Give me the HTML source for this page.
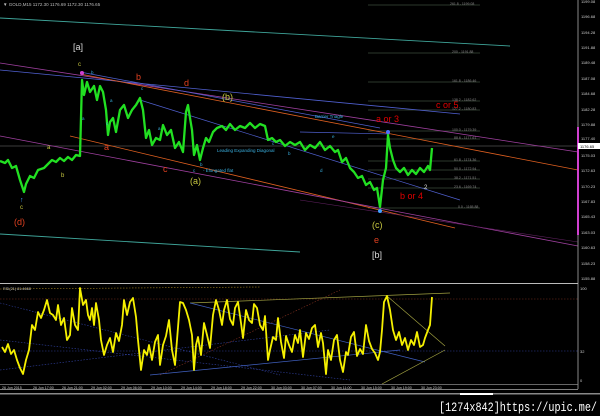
<!DOCTYPE html>
<html><head><meta charset="utf-8"><style>
html,body{margin:0;padding:0;background:#000;width:600px;height:416px;overflow:hidden}
svg{display:block;font-family:"Liberation Sans",sans-serif}
</style></head><body>
<svg width="600" height="416" viewBox="0 0 600 416" xmlns="http://www.w3.org/2000/svg">
<rect width="600" height="416" fill="#000"/>
<text x="3" y="6" font-size="4.5" fill="#bbb">▼ GOLD,M15  1172.30 1176.69 1172.30 1176.65</text>
<g stroke="#3a4a3a" stroke-width="0.7">
<line x1="368" y1="5" x2="480" y2="5"/><line x1="368" y1="53" x2="480" y2="53"/>
<line x1="368" y1="82" x2="480" y2="82"/><line x1="368" y1="101" x2="480" y2="101"/>
<line x1="368" y1="110" x2="480" y2="110"/><line x1="368" y1="131" x2="480" y2="131"/>
<line x1="368" y1="139" x2="480" y2="139"/><line x1="368" y1="161" x2="480" y2="161"/>
<line x1="368" y1="170" x2="480" y2="170"/><line x1="368" y1="179" x2="480" y2="179"/>
<line x1="368" y1="188" x2="480" y2="188"/><line x1="368" y1="208" x2="480" y2="208"/>
</g>
<g font-size="3.5" fill="#8a8a8a">
<text x="450" y="5">261.8 - 1199.08</text><text x="452" y="53">200 - 1191.88</text>
<text x="452" y="82">161.8 - 1186.46</text><text x="452" y="101">138.2 - 1182.62</text>
<text x="452" y="110">127.2 - 1180.83</text><text x="452" y="131">100.0 - 1179.39</text>
<text x="454" y="139">88.6 - 1177.61</text><text x="454" y="161">61.8 - 1174.36</text>
<text x="454" y="170">50.0 - 1172.94</text><text x="454" y="179">38.2 - 1171.51</text>
<text x="454" y="188">23.6 - 1169.74</text><text x="458" y="208">0.0 - 1165.88</text>
</g>
<line x1="0" y1="146" x2="578" y2="146" stroke="#777" stroke-width="0.6"/>
<line x1="0" y1="18" x2="510" y2="46" stroke="#3fa59a" stroke-width="0.9"/>
<line x1="0" y1="234" x2="300" y2="252" stroke="#3fa59a" stroke-width="0.9"/>
<line x1="0" y1="63" x2="578" y2="152" stroke="#a040a0" stroke-width="0.8"/>
<line x1="0" y1="70" x2="460" y2="114" stroke="#5060d0" stroke-width="0.8"/>
<line x1="80" y1="72" x2="380" y2="128" stroke="#5060d0" stroke-width="0.7"/>
<line x1="300" y1="132" x2="390" y2="134" stroke="#5060d0" stroke-width="0.7"/>
<line x1="80" y1="74" x2="578" y2="170" stroke="#e06020" stroke-width="0.8"/>
<line x1="70" y1="136" x2="455" y2="228" stroke="#e06020" stroke-width="0.8"/>
<line x1="0" y1="136" x2="578" y2="246" stroke="#a040a0" stroke-width="0.8"/>
<line x1="140" y1="100" x2="460" y2="200" stroke="#5060d0" stroke-width="0.7"/>
<line x1="300" y1="200" x2="578" y2="242" stroke="#602060" stroke-width="0.6"/>
<polyline fill="none" stroke="#22e022" stroke-width="2.3" stroke-linejoin="round" points="0,161 5,163 8,160 12,168 16,166 20,180 24,192 26,184 30,176 34,178 38,170 44,168 48,164 52,160 56,162 60,158 64,161 68,157 72,160 76,155 80,156 82,80 84,95 87,82 90,92 94,86 97,100 100,86 103,92 106,110 108,135 110,122 113,118 116,132 120,110 124,105 128,118 132,110 136,105 140,98 143,110 146,138 149,130 152,145 156,138 160,140 163,125 167,135 171,130 175,148 179,142 183,152 186,112 188,105 190,118 192,130 194,155 197,145 200,160 203,148 206,138 209,142 213,132 217,128 222,126 226,130 230,124 235,130 240,126 245,128 250,123 255,128 260,124 265,126 268,140 272,138 276,142 280,140 285,146 290,142 295,145 300,142 305,150 310,145 315,148 320,142 325,150 330,146 335,152 338,150 342,162 346,158 350,168 354,172 358,178 362,176 366,185 370,182 374,190 377,188 380,207 383,180 386,168 388,135 390,148 393,160 396,168 400,172 404,168 408,175 412,170 416,174 420,168 424,172 428,166 430,170 432,148"/>
<circle cx="82" cy="73" r="2" fill="#d040d0"/>
<circle cx="388" cy="132" r="2" fill="#5070ff"/>
<circle cx="380" cy="211" r="2" fill="#40a0ff"/>
<text x="20" y="202" font-size="7" fill="#40a0ff">↑</text>
<g font-size="9">
<text x="73" y="50" fill="#ddd">[a]</text>
<text x="372" y="258" fill="#ddd">[b]</text>
<text x="14" y="225" fill="#e04020">(d)</text>
<text x="374" y="243" fill="#e04020">e</text>
<text x="184" y="86" fill="#e04020">d</text>
<text x="136" y="80" fill="#e04020">b</text>
<text x="163" y="172" fill="#e04020">c</text>
<text x="104" y="150" fill="#e04020">a</text>
<text x="376" y="122" fill="#e00000">a or 3</text>
<text x="400" y="199" fill="#e00000">b or 4</text>
<text x="436" y="108" fill="#e00000">c or 5</text>
<text x="222" y="100" fill="#c8c840">(b)</text>
<text x="190" y="184" fill="#c8c840">(a)</text>
<text x="372" y="228" fill="#c8c840">(c)</text>
</g>
<g font-size="6">
<text x="78" y="66" fill="#c8c840">c</text>
<text x="47" y="149" fill="#c8c840">a</text>
<text x="61" y="177" fill="#c8c840">b</text>
<text x="20" y="209" fill="#c8c840">c</text>
<text x="424" y="189" fill="#ddd">2</text>
</g>
<g font-size="4.5" fill="#3ab0e0">
<text x="217" y="152">Leading Expanding Diagonal</text>
<text x="315" y="118">Barrier Triagle</text>
<text x="203" y="172">- Elongated flat</text>
<text x="91" y="74">b</text><text x="82" y="120">a</text><text x="106" y="125">c</text>
<text x="110" y="102">a</text><text x="141" y="90">c</text><text x="158" y="130">a</text>
<text x="200" y="166">b</text><text x="193" y="172">c</text><text x="320" y="172">d</text>
<text x="332" y="138">e</text><text x="288" y="155">b</text><text x="272" y="145">c</text>
</g>
<line x1="578" y1="0" x2="578" y2="389" stroke="#aaa" stroke-width="0.8"/>
<rect x="577" y="127" width="2" height="108" fill="#d040d0"/>
<g font-size="4" fill="#ccc">
<text x="581" y="3">1199.08</text><text x="581" y="18">1196.68</text><text x="581" y="34">1194.28</text>
<text x="581" y="49">1191.88</text><text x="581" y="64">1189.48</text><text x="581" y="80">1187.08</text>
<text x="581" y="95">1184.68</text><text x="581" y="111">1182.28</text><text x="581" y="126">1179.88</text>
<text x="581" y="140">1177.40</text><text x="581" y="157">1175.03</text><text x="581" y="172">1172.63</text>
<text x="581" y="188">1170.23</text><text x="581" y="203">1167.83</text><text x="581" y="218">1165.43</text>
<text x="581" y="234">1163.03</text><text x="581" y="249">1160.63</text><text x="581" y="265">1158.23</text>
<text x="581" y="280">1155.88</text>
</g>
<rect x="578" y="143" width="22" height="6" fill="#fff"/>
<text x="580" y="148" font-size="4" fill="#000">1176.65</text>
<line x1="0" y1="283.5" x2="578" y2="283.5" stroke="#bbb" stroke-width="1"/>
<text x="3" y="290" font-size="3.8" fill="#ccc">RSI(21) 81.4668</text>
<g stroke-dasharray="1.5,1.5" stroke-width="0.6" fill="none">
<line x1="0" y1="299" x2="578" y2="299" stroke="#803020"/>
<line x1="0" y1="351" x2="578" y2="351" stroke="#3040a0"/>
<line x1="0" y1="289" x2="260" y2="287" stroke="#a08020"/>
<line x1="0" y1="303" x2="280" y2="375" stroke="#3040a0"/>
<line x1="0" y1="340" x2="350" y2="380" stroke="#3040a0"/>
<line x1="0" y1="370" x2="330" y2="330" stroke="#3040a0"/>
<line x1="160" y1="375" x2="340" y2="290" stroke="#803020"/>
</g>
<g stroke-width="0.7" fill="none">
<line x1="190" y1="303" x2="450" y2="293" stroke="#a0a040"/>
<line x1="190" y1="303" x2="425" y2="362" stroke="#4060c0"/>
<line x1="150" y1="375" x2="400" y2="350" stroke="#4060c0"/>
<line x1="387" y1="296" x2="445" y2="346" stroke="#a0a040"/>
<line x1="382" y1="384" x2="445" y2="350" stroke="#a0a040"/>
</g>
<polyline fill="none" stroke="#f5f000" stroke-width="1.8" stroke-linejoin="round" points="2,347 5,352 8,344 11,354 14,350 17,360 20,368 23,374 26,360 29,350 32,325 35,330 38,312 41,318 44,310 47,300 50,313 53,315 56,320 58,305 61,325 64,318 67,340 70,335 72,308 75,325 78,330 80,288 83,305 86,300 88,315 90,320 92,308 94,325 96,303 99,320 101,340 104,355 107,345 110,338 113,352 116,333 119,341 122,325 124,300 127,315 130,302 133,298 136,317 138,340 141,370 144,350 147,355 149,345 152,360 155,342 158,335 160,365 163,345 166,336 169,320 172,350 175,365 177,340 180,302 183,303 186,310 189,320 192,335 194,370 196,345 198,337 201,355 204,323 207,335 210,348 213,315 216,300 219,310 222,325 224,310 227,300 230,319 233,325 235,308 238,302 241,323 243,338 246,310 249,320 252,323 254,304 257,308 260,325 263,330 265,316 268,360 270,350 273,337 276,340 278,318 281,342 284,358 286,336 289,345 292,352 295,335 298,343 300,330 303,357 306,333 309,339 312,328 315,325 318,347 321,333 323,343 326,374 328,350 331,360 334,340 337,335 340,360 343,372 346,352 348,355 351,337 354,332 357,356 360,349 363,354 366,325 369,341 372,349 375,353 378,360 380,352 382,330 384,302 387,296 390,310 393,330 396,340 399,332 402,345 405,338 408,350 411,340 414,345 417,332 420,347 423,345 425,338 428,330 430,325 432,297"/>
<g font-size="4" fill="#ccc"><text x="580" y="290">100</text><text x="580" y="353">32</text><text x="580" y="382">0</text></g>
<line x1="0" y1="384.5" x2="578" y2="384.5" stroke="#888" stroke-width="0.8"/>
<line x1="0" y1="389.5" x2="578" y2="389.5" stroke="#aaa" stroke-width="0.8"/>
<g font-size="3.6" fill="#ccc">
<text x="2" y="389">26 Jun 2015</text><text x="33" y="389">26 Jun 17:00</text><text x="62" y="389">26 Jun 21:00</text>
<text x="91" y="389">29 Jun 02:00</text><text x="121" y="389">29 Jun 06:00</text><text x="151" y="389">29 Jun 10:00</text>
<text x="181" y="389">29 Jun 14:00</text><text x="211" y="389">29 Jun 18:00</text><text x="241" y="389">29 Jun 22:00</text>
<text x="271" y="389">30 Jun 03:00</text><text x="301" y="389">30 Jun 07:00</text><text x="331" y="389">30 Jun 11:00</text>
<text x="361" y="389">30 Jun 15:00</text><text x="391" y="389">30 Jun 19:00</text><text x="421" y="389">30 Jun 23:00</text>
</g>
<rect x="0" y="393" width="600" height="1.5" fill="#888"/>
<rect x="460" y="393" width="33" height="2" fill="#fff"/>
<text x="439" y="411" font-size="13" fill="#fff" font-family="Liberation Mono,monospace" textLength="158" lengthAdjust="spacingAndGlyphs">[1274x842]https://upic.me/</text>
</svg>
</body></html>
